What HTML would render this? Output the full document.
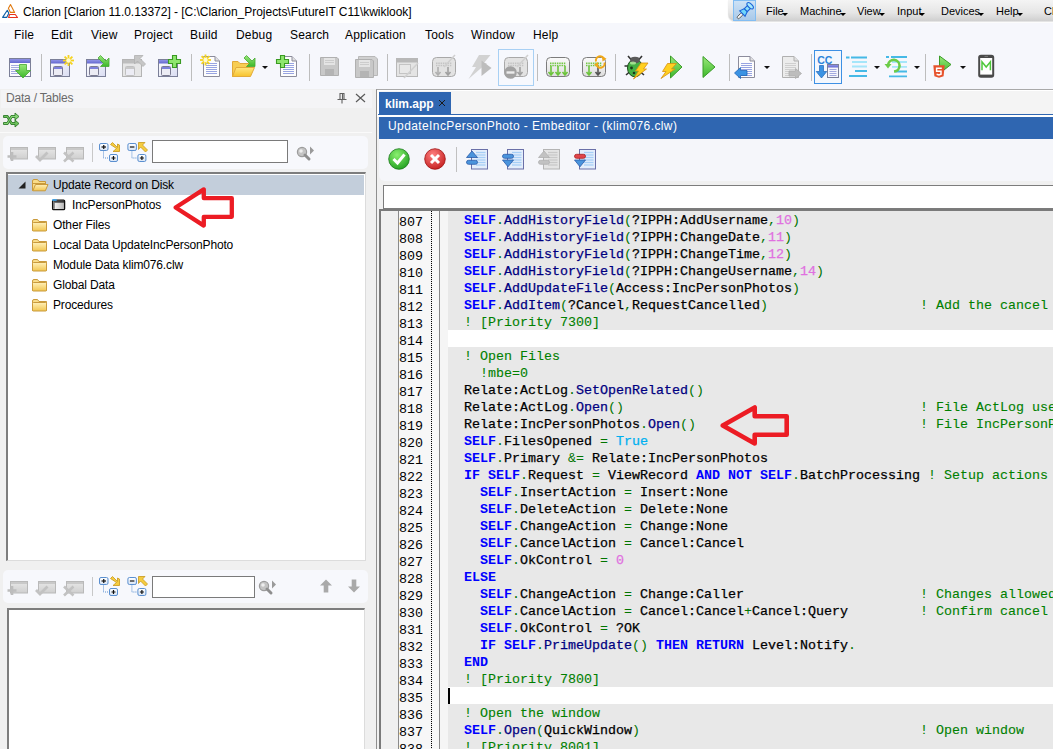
<!DOCTYPE html>
<html><head><meta charset="utf-8">
<style>
*{margin:0;padding:0;box-sizing:border-box}
html,body{width:1053px;height:749px;overflow:hidden}
body{position:relative;background:#f0f0f0;font-family:"Liberation Sans",sans-serif;font-size:12px;color:#000}
.a{position:absolute}
svg{position:absolute;overflow:visible}
#title{left:0;top:0;width:1053px;height:23px;background:#fff}
#title .t{left:23px;top:5px;font-size:12px;white-space:pre;color:#000;letter-spacing:-0.03px}
#vbox{left:728px;top:0;width:330px;height:21px;border-bottom-left-radius:7px;background:linear-gradient(#f4f4f4,#e6e6e6 60%,#cfcfcf);box-shadow:0 1px 1px rgba(0,0,0,.12)}
#vbox span{position:absolute;top:5px;font-family:"Liberation Sans",sans-serif;font-size:11px;color:#000}
#vbox span::after{content:"";position:absolute;right:-4px;bottom:1px;border-left:3px solid transparent;border-right:3px solid transparent;border-top:3px solid #000}
#vbox span.nod::after{display:none}
#pin{left:5px;top:0;width:23px;height:21px;background:linear-gradient(#cde2f6,#a9c9e9);border:1px solid #82bdf2}
#menu{left:0;top:23px;width:1053px;height:66px;background:#f6f7fc}
#menu span{position:absolute;top:5px;font-size:12px;color:#000;letter-spacing:0.2px}
.sep{position:absolute;width:1px;background:#c5c5c5}
/* left panel */
#hdr{left:1px;top:90px;width:371px;height:18px;background:#f4f4f6}
#hdr .t{left:5px;top:1px;color:#6a6a6a;font-size:12px;letter-spacing:-0.2px}
#lrow{left:0;top:108px;width:372px;height:24px;background:#f0f0f0}
#lline{left:0;top:132px;width:372px;height:1px;background:#fafafa}
.tb{position:absolute;background:#f7f8fc;border-radius:5px}
.box{position:absolute;background:#fff;border-top:2px solid #7d7d7d;border-left:2px solid #7d7d7d;border-right:1px solid #dcdcdc;border-bottom:1px solid #dcdcdc}
.srch{position:absolute;background:#fff;border:1px solid #7a7a7a}
.tree div{position:absolute;left:0;height:20px;white-space:pre;font-size:12px}
/* right */
#doc{left:376px;top:89px;width:677px;height:660px;background:#f0f0f0;border-top:1px solid #a9a9a9;border-left:1px solid #8e8e8e}
#tab{left:379px;top:92px;width:72px;height:22px;background:#2f66b1;color:#fff}
#tabline{left:378px;top:114px;width:675px;height:1px;background:#2f66b1}
#whitegap{left:377px;top:90px;width:676px;height:24px;background:#f4f4f4;border-top:1px solid #fff;border-left:2px solid #fff}
#wg2{left:377px;top:114px;width:676px;height:3px;background:#fff}
#wtitle{left:379px;top:117px;width:674px;height:22px;background:#2f66b1;color:#fff}
#wtb{left:379px;top:139px;width:674px;height:42px;background:#f5f6fa;border-radius:0 0 0 6px}
#inp{left:383px;top:185px;width:670px;height:24px;background:#fff;border:1px solid #7c7c7c;border-right:none}
#ed{left:379px;top:209px;width:674px;height:540px;background:#e8e8e8;border-top:2px solid #7a7a7a;border-left:2px solid #7a7a7a}
#g1{left:381px;top:211px;width:17px;height:538px;background:#f0f0f0}
#gl1{left:398px;top:211px;width:1px;height:538px;background:#8a8a8a}
#g2{left:399px;top:211px;width:32px;height:538px;background:#f7f7f7}
#gl2{left:431px;top:211px;width:1px;height:538px;background-image:linear-gradient(#000 50%,transparent 50%);background-size:1px 2px}
#g3{left:432px;top:211px;width:7px;height:538px;background:#f7f7f7}
#gl3{left:439px;top:211px;width:1px;height:538px;background:#8a8a8a}
#g4{left:440px;top:211px;width:8px;height:538px;background:#f5f5f5}
.code{position:absolute;left:448px;top:211px;width:605px;font-family:"Liberation Mono",monospace;font-size:13.333px;line-height:17px;color:#000;white-space:pre;-webkit-text-stroke:0.25px}
.code .r{height:17px;padding-top:3px;line-height:13px}
.code .g{background:#e8e8e8}
.code .w{background:#fff}
.code b{color:#0000ff;font-weight:bold;-webkit-text-stroke:0}
.code i{font-style:normal}
.code .p{color:#007400;-webkit-text-stroke:0}
.code .m{color:#000080}
.code .n{color:#e070e0}
.code .c{color:#008000;-webkit-text-stroke:0.1px}
.code .t{color:#00b0f0}
.nums{position:absolute;left:399px;top:211px;font-family:"Liberation Mono",monospace;font-size:13.333px;color:#000}
.nums div{height:17px;padding-top:5px;line-height:13px}
</style></head><body>
<div id="title" class="a">
<svg style="left:0;top:0" width="20" height="20" viewBox="0 0 20 20"><path d="M10.5 4.6 L8.4 8.2 L10.4 12.4 H14.6 Z" fill="none" stroke="#e07a12" stroke-width="1.1" stroke-linejoin="round"/><path d="M7.3 10.3 L2.6 17.4 H6.7 L8.8 13.2 Z" fill="none" stroke="#0f5fa6" stroke-width="1.1" stroke-linejoin="round"/><path d="M9.6 14.5 H15.3 L17.5 17.5 H8.6 Z" fill="none" stroke="#e8321e" stroke-width="1.1" stroke-linejoin="round"/></svg>
<div class="a t">Clarion [Clarion 11.0.13372] - [C:\Clarion_Projects\FutureIT C11\kwiklook]</div>
</div>
<div id="vbox" class="a">
 <div id="pin" class="a"><svg style="left:-1px;top:-1px" width="24" height="22" viewBox="0 0 24 22"><g transform="rotate(-45 11.5 11.4)"><rect x="1.8" y="10.1" width="7" height="2.6" rx="1.3" fill="#f4f4f4" stroke="#555" stroke-width=".9"/><path d="M8.5 7.6 V15.2 L13.5 13.4 V9.4 Z" fill="#6fd6fa" stroke="#1c64d8" stroke-width="1.1"/><rect x="13.3" y="9.3" width="4.5" height="4.2" fill="#8ee0fa" stroke="#1c64d8" stroke-width="1.1"/><ellipse cx="19.5" cy="11.4" rx="2" ry="4" fill="#a6eafc" stroke="#1c64d8" stroke-width="1.1"/></g></svg></div>
 <span style="left:38px">File</span>
 <span style="left:72px">Machine</span>
 <span style="left:129px">View</span>
 <span style="left:169px">Input</span>
 <span style="left:213px">Devices</span>
 <span style="left:268px">Help</span>
 <span style="left:316px" class="nod">Cl</span>
</div>
<div id="menu" class="a">
 <span style="left:14px">File</span>
 <span style="left:51px">Edit</span>
 <span style="left:91px">View</span>
 <span style="left:134px">Project</span>
 <span style="left:190px">Build</span>
 <span style="left:236px">Debug</span>
 <span style="left:290px">Search</span>
 <span style="left:345px">Application</span>
 <span style="left:425px">Tools</span>
 <span style="left:471px">Window</span>
 <span style="left:533px">Help</span>
</div>
<svg style="left:0;top:0" width="1053" height="89" viewBox="0 0 1053 89"><defs>
<linearGradient id="gA" x1="0" y1="0" x2="0" y2="1"><stop offset="0" stop-color="#9ae87a"/><stop offset="1" stop-color="#3cb82a"/></linearGradient>
<linearGradient id="tb" x1="0" y1="0" x2="0" y2="1"><stop offset="0" stop-color="#8f92e6"/><stop offset="1" stop-color="#6367cf"/></linearGradient>
<linearGradient id="wb" x1="0" y1="0" x2="1" y2="1"><stop offset="0" stop-color="#ffffff"/><stop offset="1" stop-color="#d9dcf2"/></linearGradient>
<linearGradient id="fo" x1="0" y1="0" x2="0" y2="1"><stop offset="0" stop-color="#ffe680"/><stop offset="1" stop-color="#f7c22c"/></linearGradient>
<linearGradient id="cg" x1="0" y1="0" x2="0" y2="1"><stop offset="0" stop-color="#fafafa"/><stop offset="1" stop-color="#dedede"/></linearGradient>
</defs><rect x="9.5" y="58.5" width="21" height="18" fill="#fafafd" stroke="#7b7f98"/><rect x="10" y="59" width="20" height="4" fill="url(#tb)"/><line x1="11" x2="19" y1="65.5" y2="65.5" stroke="#a3aadf"/><line x1="11" x2="19" y1="67.5" y2="67.5" stroke="#a3aadf"/><line x1="11" x2="19" y1="69.5" y2="69.5" stroke="#a3aadf"/><line x1="11" x2="19" y1="71.5" y2="71.5" stroke="#a3aadf"/><line x1="11" x2="19" y1="73.5" y2="73.5" stroke="#a3aadf"/><path d="M19.5 64.5 H26.5 V70.5 H30.5 L23 78 L15.5 70.5 H19.5 Z" fill="url(#gA)" stroke="#45a830" stroke-width=".8"/><rect x="50.5" y="59.5" width="19" height="17" fill="url(#wb)" stroke="#7b7f98"/><rect x="51" y="60" width="18" height="3.5" fill="url(#tb)"/><rect x="53.5" y="66.5" width="9" height="9" rx="1" fill="#ececf4" stroke="#7a7a90"/><rect x="54" y="67" width="8" height="2" fill="#7d80dc"/><line x1="68.5" y1="60.5" x2="74.0" y2="60.5" stroke="#f5d320" stroke-width="1.8"/><line x1="68.5" y1="60.5" x2="72.4" y2="64.4" stroke="#f5d320" stroke-width="1.8"/><line x1="68.5" y1="60.5" x2="68.5" y2="66.0" stroke="#f5d320" stroke-width="1.8"/><line x1="68.5" y1="60.5" x2="64.6" y2="64.4" stroke="#f5d320" stroke-width="1.8"/><line x1="68.5" y1="60.5" x2="63.0" y2="60.5" stroke="#f5d320" stroke-width="1.8"/><line x1="68.5" y1="60.5" x2="64.6" y2="56.6" stroke="#f5d320" stroke-width="1.8"/><line x1="68.5" y1="60.5" x2="68.5" y2="55.0" stroke="#f5d320" stroke-width="1.8"/><line x1="68.5" y1="60.5" x2="72.4" y2="56.6" stroke="#f5d320" stroke-width="1.8"/><circle cx="68.5" cy="60.5" r="2.2" fill="#fffbd0"/><rect x="86.5" y="59.5" width="19" height="17" fill="url(#wb)" stroke="#7b7f98"/><rect x="87" y="60" width="18" height="3.5" fill="url(#tb)"/><rect x="89.5" y="66.5" width="9" height="9" rx="1" fill="#ececf4" stroke="#7a7a90"/><rect x="90" y="67" width="8" height="2" fill="#7d80dc"/><path d="M100.5 55.5 L106.0 61.0 L109.0 58.0 L109.0 66.5 L100.5 66.5 L103.5 63.5 L98.0 58.0 Z" fill="url(#gA)" stroke="#45a830" stroke-width=".8"/><rect x="122.5" y="59.5" width="19" height="17" fill="#e6e6e6" stroke="#b4b4b4"/><rect x="123" y="60" width="18" height="3.5" fill="#bdbdbd"/><rect x="125.5" y="66.5" width="9" height="9" rx="1" fill="#ececf4" stroke="#c0c0c0"/><rect x="126" y="67" width="8" height="2" fill="#c8c8c8"/><path d="M134.5 55.5 L143.0 55.5 L140.0 58.5 L145.5 64.0 L143.0 66.5 L137.5 61.0 L134.5 64.0 Z" fill="#c6c6c6" stroke="#b0b0b0" stroke-width=".8"/><rect x="158.5" y="59.5" width="19" height="17" fill="url(#wb)" stroke="#7b7f98"/><rect x="159" y="60" width="18" height="3.5" fill="url(#tb)"/><rect x="161.5" y="66.5" width="9" height="9" rx="1" fill="#ececf4" stroke="#7a7a90"/><rect x="162" y="67" width="8" height="2" fill="#7d80dc"/><path d="M172.5 55.5 h4 v4 h4 v4 h-4 v4 h-4 v-4 h-4 v-4 h4 Z" fill="#8ee66e" stroke="#3a9a22" stroke-width="1.1"/><path d="M203.5 56.5 H215 L219.5 61 V76.5 H203.5 Z" fill="#fdfdfd" stroke="#8c8c9c"/><path d="M215 56.5 V61 H219.5" fill="#e0e0e0" stroke="#8c8c9c"/><line x1="206" x2="217" y1="63.5" y2="63.5" stroke="#98a4e2"/><line x1="206" x2="217" y1="65.5" y2="65.5" stroke="#98a4e2"/><line x1="206" x2="217" y1="67.5" y2="67.5" stroke="#98a4e2"/><line x1="206" x2="217" y1="69.5" y2="69.5" stroke="#98a4e2"/><line x1="206" x2="217" y1="71.5" y2="71.5" stroke="#98a4e2"/><line x1="206" x2="217" y1="73.5" y2="73.5" stroke="#98a4e2"/><line x1="205.5" y1="60.0" x2="211.0" y2="60.0" stroke="#f5d320" stroke-width="1.8"/><line x1="205.5" y1="60.0" x2="209.4" y2="63.9" stroke="#f5d320" stroke-width="1.8"/><line x1="205.5" y1="60.0" x2="205.5" y2="65.5" stroke="#f5d320" stroke-width="1.8"/><line x1="205.5" y1="60.0" x2="201.6" y2="63.9" stroke="#f5d320" stroke-width="1.8"/><line x1="205.5" y1="60.0" x2="200.0" y2="60.0" stroke="#f5d320" stroke-width="1.8"/><line x1="205.5" y1="60.0" x2="201.6" y2="56.1" stroke="#f5d320" stroke-width="1.8"/><line x1="205.5" y1="60.0" x2="205.5" y2="54.5" stroke="#f5d320" stroke-width="1.8"/><line x1="205.5" y1="60.0" x2="209.4" y2="56.1" stroke="#f5d320" stroke-width="1.8"/><circle cx="205.5" cy="60" r="2.2" fill="#fffbd0"/><path d="M232.5 61.5 H238 L240 63.5 H249.5 V76.5 H232.5 Z" fill="#f7cd52" stroke="#e0a838"/><path d="M232.5 76.5 L236 67.5 H254.5 L250.5 76.5 Z" fill="url(#fo)" stroke="#e3ab3a"/><path d="M246.5 55.5 L252.0 61.0 L255.0 58.0 L255.0 66.5 L246.5 66.5 L249.5 63.5 L244.0 58.0 Z" fill="url(#gA)" stroke="#45a830" stroke-width=".8"/><path d="M280.5 56.5 H292 L296.5 61 V76.5 H280.5 Z" fill="#fdfdfd" stroke="#8c8c9c"/><path d="M292 56.5 V61 H296.5" fill="#e0e0e0" stroke="#8c8c9c"/><line x1="283" x2="294" y1="63.5" y2="63.5" stroke="#98a4e2"/><line x1="283" x2="294" y1="65.5" y2="65.5" stroke="#98a4e2"/><line x1="283" x2="294" y1="67.5" y2="67.5" stroke="#98a4e2"/><line x1="283" x2="294" y1="69.5" y2="69.5" stroke="#98a4e2"/><line x1="283" x2="294" y1="71.5" y2="71.5" stroke="#98a4e2"/><line x1="283" x2="294" y1="73.5" y2="73.5" stroke="#98a4e2"/><path d="M280.5 55.5 h4 v4 h4 v4 h-4 v4 h-4 v-4 h-4 v-4 h4 Z" fill="#8ee66e" stroke="#3a9a22" stroke-width="1.1"/><path d="M320.5 57.5 H337 L338.5 59 V75.5 H320.5 Z" fill="#c8c8c8" stroke="#b0b0b0"/><rect x="324" y="58" width="11" height="7" fill="#e4e4e4"/><path d="M325 60.5 H334 M325 62.5 H334" stroke="#cccccc"/><rect x="325" y="69" width="9" height="6" fill="#b4b4b4"/><path d="M358.5 56.5 H375 L377.5 59 V75.5 H358.5 Z" fill="#d0d0d0" stroke="#b8b8b8"/><path d="M355.5 59.5 H372 L373.5 61 V77.5 H355.5 Z" fill="#c8c8c8" stroke="#b0b0b0"/><rect x="359" y="60" width="11" height="7" fill="#e4e4e4"/><path d="M360 62.5 H369 M360 64.5 H369" stroke="#cccccc"/><rect x="360" y="71" width="9" height="6" fill="#b4b4b4"/><rect x="396.5" y="58.5" width="21" height="18" fill="#e4e4e4" stroke="#b8b8b8"/><rect x="397" y="59" width="20" height="3.5" fill="#b8b8b8"/><rect x="399.5" y="64.5" width="11" height="9" fill="#e8e8e8" stroke="#c4c4c4"/><path d="M418 63 L404 78" stroke="#d0d0d0" stroke-width="1.6"/><rect x="432.5" y="57.5" width="23" height="19" rx="4" fill="#e2e2e2" stroke="#a8a8a8"/><line x1="436" x2="452" y1="63.3" y2="63.3" stroke="#c4c4c4" stroke-width="1.5" stroke-dasharray="1.5 .8"/><line x1="436" x2="452" y1="65.4" y2="65.4" stroke="#c4c4c4" stroke-width="1.5" stroke-dasharray="1.5 .8"/><path d="M438 67 V75 M435.5 72 L438 75 L440.5 72" stroke="#b0b0b0" stroke-width="1.6" fill="none"/><path d="M448 67 V75 M445.5 72 L448 75 L450.5 72" stroke="#a0a0a0" stroke-width="1.6" fill="none"/><path d="M455 55 L444 67" stroke="#cfcfcf" stroke-width="1.6"/><path d="M479 55 H490.5 L484 63 H487 L468.5 79 L476 67 H472 Z" fill="#d2d2d2"/><path d="M481.5 60.5 L491.5 68 L481.5 76 Z" fill="#bdbdbd"/><rect x="498.5" y="49.5" width="35" height="36" fill="#f6f8fd" stroke="#a8d0f4"/><rect x="504.5" y="57.5" width="23" height="19" rx="4" fill="#e2e2e2" stroke="#a8a8a8"/><line x1="508" x2="524" y1="63.3" y2="63.3" stroke="#c4c4c4" stroke-width="1.5" stroke-dasharray="1.5 .8"/><line x1="508" x2="524" y1="65.4" y2="65.4" stroke="#c4c4c4" stroke-width="1.5" stroke-dasharray="1.5 .8"/><path d="M520 67 V75 M517.5 72 L520 75 L522.5 72" stroke="#a0a0a0" stroke-width="1.6" fill="none"/><path d="M528 55 L517 67" stroke="#cfcfcf" stroke-width="1.6"/><circle cx="510.5" cy="72.5" r="6.3" fill="#a2a2a2"/><rect x="506.5" y="71.3" width="8" height="2.4" fill="#ececec"/><rect x="546.5" y="57.5" width="23" height="19" rx="4" fill="url(#cg)" stroke="#7c7c7c"/><line x1="550" x2="566" y1="63.3" y2="63.3" stroke="#74c846" stroke-width="1.5" stroke-dasharray="1.5 .8"/><line x1="550" x2="566" y1="65.4" y2="65.4" stroke="#74c846" stroke-width="1.5" stroke-dasharray="1.5 .8"/><path d="M551 66 V75 M548.5 72 L551 75 L553.5 72" stroke="#6cc43c" stroke-width="1.6" fill="none"/><path d="M558 66 V75 M555.5 72 L558 75 L560.5 72" stroke="#6cc43c" stroke-width="1.6" fill="none"/><path d="M565 66 V75 M562.5 72 L565 75 L567.5 72" stroke="#6cc43c" stroke-width="1.6" fill="none"/><rect x="582.5" y="57.5" width="23" height="19" rx="4" fill="url(#cg)" stroke="#7c7c7c"/><line x1="586" x2="602" y1="63.3" y2="63.3" stroke="#74c846" stroke-width="1.5" stroke-dasharray="1.5 .8"/><line x1="586" x2="602" y1="65.4" y2="65.4" stroke="#74c846" stroke-width="1.5" stroke-dasharray="1.5 .8"/><path d="M589 66 V75 M586.5 72 L589 75 L591.5 72" stroke="#6cc43c" stroke-width="1.6" fill="none"/><path d="M598 66 V75 M595.5 72 L598 75 L600.5 72" stroke="#555555" stroke-width="1.6" fill="none"/><path d="M596 61.5 A4.2 4.2 0 0 1 604 59" fill="none" stroke="#f0a818" stroke-width="2"/><path d="M604.5 62.5 A4.2 4.2 0 0 1 596.5 65" fill="none" stroke="#f0a818" stroke-width="2"/><path d="M602 56 L606.5 58.8 L602.5 61.5 Z M598.5 67.5 L594 64.7 L598 62 Z" fill="#f0a818"/><path d="M628 56 L631.5 60 M642 56 L638.5 60 M624.5 66 H629 M645 66 H641 M626 75 L630 71.5 M644 75 L640 71.5" stroke="#333" stroke-width="1.6"/><ellipse cx="635" cy="68" rx="7.5" ry="8.8" fill="#44b044" stroke="#1d4d1d" stroke-width="1"/><ellipse cx="635" cy="60" rx="4.8" ry="3.2" fill="#5a5a5a"/><ellipse cx="633" cy="63" rx="3" ry="1.5" fill="#b8f0a0" opacity=".8"/><circle cx="631.5" cy="68" r="1.4" fill="#1a3a1a"/><circle cx="634" cy="73" r="1.3" fill="#1a3a1a"/><path d="M641 63 H648 L643.5 69 H646.5 L633.5 79 L638.5 71 H635.5 Z" fill="#ffd020" stroke="#d89010" stroke-width=".8"/><path d="M670.5 56 L682 67 L670.5 78 Z" fill="url(#gA)" stroke="#3a9c28"/><path d="M667.5 63.5 H676.5 L671.5 69 H675 L661 78.5 L666 71.5 H662.5 Z" fill="#ffd020" stroke="#d89010" stroke-width=".8"/><path d="M703 56.5 L715 67 L703 77.5 Z" fill="url(#gA)" stroke="#3a9c28"/><path d="M738.5 56.5 H750 L754.5 61 V77.5 H738.5 Z" fill="#fdfdfd" stroke="#8c8c9c"/><path d="M750 56.5 V61 H754.5" fill="#e0e0e0" stroke="#8c8c9c"/><line x1="741" x2="752" y1="63.5" y2="63.5" stroke="#98a4e2"/><line x1="741" x2="752" y1="65.5" y2="65.5" stroke="#98a4e2"/><line x1="741" x2="752" y1="67.5" y2="67.5" stroke="#98a4e2"/><line x1="741" x2="752" y1="69.5" y2="69.5" stroke="#98a4e2"/><line x1="741" x2="752" y1="71.5" y2="71.5" stroke="#98a4e2"/><line x1="741" x2="752" y1="73.5" y2="73.5" stroke="#98a4e2"/><line x1="741" x2="752" y1="75.5" y2="75.5" stroke="#98a4e2"/><path d="M734.5 73 L740.5 67.5 V70.5 H747 V75.5 H740.5 V78.5 Z" fill="#3b93e3" stroke="#1f65b8" stroke-width=".8"/><path d="M782.5 56.5 H794 L798.5 61 V77.5 H782.5 Z" fill="#ececec" stroke="#b0b0b0"/><path d="M794 56.5 V61 H798.5" fill="#e0e0e0" stroke="#b0b0b0"/><line x1="785" x2="796" y1="63.5" y2="63.5" stroke="#cfcfcf"/><line x1="785" x2="796" y1="65.5" y2="65.5" stroke="#cfcfcf"/><line x1="785" x2="796" y1="67.5" y2="67.5" stroke="#cfcfcf"/><line x1="785" x2="796" y1="69.5" y2="69.5" stroke="#cfcfcf"/><line x1="785" x2="796" y1="71.5" y2="71.5" stroke="#cfcfcf"/><line x1="785" x2="796" y1="73.5" y2="73.5" stroke="#cfcfcf"/><line x1="785" x2="796" y1="75.5" y2="75.5" stroke="#cfcfcf"/><path d="M801.5 73.5 L795.5 68.5 V71 H789 V76 H795.5 V78.5 Z" fill="#bdbdbd" stroke="#adadad" stroke-width=".8"/><rect x="814.5" y="50.5" width="27" height="33" fill="#f3f7fd" stroke="#3d90e4"/><text x="817.3" y="63.5" font-family="Liberation Sans" font-weight="bold" font-size="10.5" fill="#2a84da" letter-spacing="-.2">CC</text><path d="M819.5 65.5 H823.5 V71.5 H826.8 L821.5 78 L816.2 71.5 H819.5 Z" fill="#3b93e3" stroke="#1f65b8" stroke-width=".7"/><rect x="827.5" y="64.5" width="11" height="13" fill="#f6f6fb" stroke="#7b7f98"/><rect x="828" y="65" width="10" height="2.5" fill="url(#tb)"/><path d="M829.5 69.5 H836.5 M829.5 71.5 H836.5 M829.5 73.5 H836.5 M829.5 75.5 H836.5" stroke="#a3aadf"/><path d="M846 57.5 H849.5 M851 57.5 H867" stroke="#45b9e6" stroke-width="1.8"/><path d="M852 62 H867 M852 66.5 H867" stroke="#a6e6fa" stroke-width="1.8"/><path d="M855 71 H867 M849 76 H867" stroke="#45b9e6" stroke-width="1.8"/><path d="M886 57 H889 M891 57 H907" stroke="#45b9e6" stroke-width="1.8"/><path d="M892 62 H907 M892 66.8 H907" stroke="#a6e6fa" stroke-width="1.8"/><path d="M895 71.5 H907 M889 76.4 H907" stroke="#45b9e6" stroke-width="1.8"/><path d="M888 65 A5.8 5.8 0 1 1 894 71.5" fill="none" stroke="#6ccc48" stroke-width="2.6"/><path d="M884.5 64 H891.5 L888 68.5 Z" fill="#6ccc48"/><path d="M939.5 56 L951 64.5 L939.5 73.5 Z" fill="url(#gA)" stroke="#3a9c28"/><path d="M933.3 65.2 H944.7 L943.6 76.3 L939 77.7 L934.4 76.3 Z" fill="#e6522c"/><path d="M941.8 68.3 H936.6 V71.2 H941 V74.2 L938.9 74.9 L936.6 74.2" fill="none" stroke="#fff" stroke-width="1.5"/><rect x="978.2" y="54.8" width="16" height="23" rx="2.8" fill="#4a4a4a"/><rect x="980.2" y="58" width="12" height="16.6" fill="#fff"/><path d="M982 70.2 V61.8 L986.2 67 L990.4 61.8 V70.2" fill="none" stroke="#4ec83a" stroke-width="1.5"/><path d="M984.5 56.4 H988" stroke="#888" stroke-width=".8"/></svg>
<div class="sep" style="left:41px;top:54px;height:27px;background:#bdbdbd"></div>
<div class="sep" style="left:191px;top:54px;height:27px;background:#bdbdbd"></div>
<div class="sep" style="left:309px;top:54px;height:27px;background:#bdbdbd"></div>
<div class="sep" style="left:387px;top:54px;height:27px;background:#bdbdbd"></div>
<div class="sep" style="left:537px;top:54px;height:27px;background:#bdbdbd"></div>
<div class="sep" style="left:615px;top:54px;height:27px;background:#bdbdbd"></div>
<div class="sep" style="left:729px;top:54px;height:27px;background:#bdbdbd"></div>
<div class="sep" style="left:811px;top:54px;height:27px;background:#bdbdbd"></div>
<div class="sep" style="left:925px;top:54px;height:27px;background:#bdbdbd"></div>
<svg style="left:262px;top:66px" width="6" height="3" viewBox="0 0 6 3"><path d="M0 0 H6 L3 3 Z" fill="#111"/></svg>
<svg style="left:764px;top:66px" width="6" height="3" viewBox="0 0 6 3"><path d="M0 0 H6 L3 3 Z" fill="#111"/></svg>
<svg style="left:874px;top:66px" width="6" height="3" viewBox="0 0 6 3"><path d="M0 0 H6 L3 3 Z" fill="#111"/></svg>
<svg style="left:914px;top:66px" width="6" height="3" viewBox="0 0 6 3"><path d="M0 0 H6 L3 3 Z" fill="#111"/></svg>
<svg style="left:960px;top:66px" width="6" height="3" viewBox="0 0 6 3"><path d="M0 0 H6 L3 3 Z" fill="#111"/></svg>
<div id="hdr" class="a"><div class="a t">Data / Tables</div></div>
<svg style="left:337px;top:92px" width="10" height="12" viewBox="0 0 10 12"><path d="M2.5 1.5 H7.5 M3 1.5 V7.5 M7 1.5 V7.5 M5.5 1.5 V7.5 M0.5 7.5 H9.5 M5 7.5 V11.5" stroke="#606060" stroke-width="1.1" fill="none"/></svg>
<svg style="left:355px;top:93px" width="11" height="10" viewBox="0 0 11 10"><path d="M1 1 L10 9 M10 1 L1 9" stroke="#5a5a5a" stroke-width="1.2"/></svg>
<div id="lrow" class="a"></div><div id="lline" class="a"></div>
<svg style="left:3px;top:112px" width="17" height="16" viewBox="0 0 17 16"><path d="M0.5 3.5 H5 L9 10.5 H12 V8 L16 11.5 L12 15 V12.5 H8 L4 5.5 H0.5 Z" fill="#6cc05a" stroke="#2f7a2a" stroke-width=".9"/><path d="M0.5 10.5 H4 L8 3.5 H12 V1 L16 4.5 L12 8 V5.5 H9 L5 12.5 H0.5 Z" fill="#86d474" stroke="#2f7a2a" stroke-width=".9"/></svg>
<div class="tb" style="left:3px;top:136px;width:365px;height:33px"></div>
<svg style="left:0;top:0" width="380" height="749" viewBox="0 0 380 749"><defs><linearGradient id="gbx" x1="0" y1="0" x2="0" y2="1"><stop offset="0" stop-color="#e8e8e8"/><stop offset="1" stop-color="#cfcfcf"/></linearGradient><linearGradient id="gsq" x1="0" y1="0" x2="0" y2="1"><stop offset="0" stop-color="#ffffff"/><stop offset="1" stop-color="#d8e4f4"/></linearGradient></defs><rect x="10.5" y="147.5" width="17" height="11.5" fill="url(#gbx)" stroke="#b9b9b9"/><rect x="11" y="148" width="16" height="2" fill="#c9c9c9"/><rect x="38.5" y="147.5" width="17" height="11.5" fill="url(#gbx)" stroke="#b9b9b9"/><rect x="39" y="148" width="16" height="2" fill="#c9c9c9"/><rect x="66.5" y="147.5" width="17" height="11.5" fill="url(#gbx)" stroke="#b9b9b9"/><rect x="67" y="148" width="16" height="2" fill="#c9c9c9"/><path d="M7.5 156.5 H16.5 M12 152 V161" stroke="#bdbdbd" stroke-width="2.6"/><path d="M36 156 L40 160 L47.5 152.5" stroke="#c2c2c2" stroke-width="2.8" fill="none"/><path d="M64 152.5 L73.5 161.5 M73.5 152.5 L64 161.5" stroke="#c2c2c2" stroke-width="2.6"/><rect x="99.5" y="143.5" width="8.5" height="7" rx="1.5" fill="url(#gsq)" stroke="#5a8fd0"/><path d="M101.5 147 H106" stroke="#111" stroke-width="1.2"/><path d="M103.75 145 V149" stroke="#111" stroke-width="1.2"/><path d="M103.5 151.5 V158 H109" stroke="#5a8fd0" stroke-dasharray="1 1" fill="none"/><rect x="109.5" y="154.5" width="8" height="7" rx="1.5" fill="url(#gsq)" stroke="#5a8fd0"/><path d="M111.5 158 H115.5 M113.5 156 V160" stroke="#111" stroke-width="1.2"/><path d="M110.5 144.5 L112.5 142.5 L117.5 147.5 L117.5 144 L119.5 145 L119.5 151.5 L113 151.5 L116.5 148.5 Z" fill="#f5cc40" stroke="#c8981a" stroke-width=".8"/><rect x="127.9" y="143.5" width="8.5" height="7" rx="1.5" fill="url(#gsq)" stroke="#5a8fd0"/><path d="M129.9 147 H134.4" stroke="#111" stroke-width="1.2"/><path d="M131.9 151.5 V158 H137.4" stroke="#5a8fd0" stroke-dasharray="1 1" fill="none"/><rect x="137.9" y="154.5" width="8" height="7" rx="1.5" fill="url(#gsq)" stroke="#5a8fd0"/><path d="M139.9 158 H143.9 M141.9 156 V160" stroke="#111" stroke-width="1.2"/><path d="M138.5 142.5 H145 L142.5 145 L147.5 150 L145.5 152 L140.5 147 L138.5 149.5 Z" fill="#f5cc40" stroke="#c8981a" stroke-width=".8"/><circle cx="302" cy="152" r="4.6" fill="#c4c4c4" stroke="#9c9c9c" stroke-width="1.2"/><circle cx="301" cy="151" r="1.8" fill="#eeeeee"/><path d="M305 155 L309 159" stroke="#8e8e8e" stroke-width="3" stroke-linecap="round"/><path d="M310 146.5 L314 150.5 L310 154.5 Z" fill="#9a9a9a"/></svg>
<div class="sep" style="left:92px;top:143px;height:19px;background:#c8c8c8"></div>
<div class="srch" style="left:152px;top:140px;width:136px;height:23px"></div>
<div class="box" style="left:6px;top:172px;width:360px;height:389px"></div>
<div class="a" style="left:8px;top:175px;width:356px;height:20px;background:#c3cedb"></div>
<svg style="left:18px;top:181px" width="8" height="8" viewBox="0 0 8 8"><path d="M7.5 0.5 V7.5 H0.5 Z" fill="#222"/></svg>
<svg style="left:32px;top:179px" width="17" height="13" viewBox="0 0 17 13"><defs><linearGradient id="fd1" x1="0" y1="0" x2="0" y2="1"><stop offset="0" stop-color="#fff0b8"/><stop offset="1" stop-color="#f2c650"/></linearGradient><linearGradient id="ic1" x1="0" y1="0" x2="1" y2="0"><stop offset="0" stop-color="#ffffff"/><stop offset="1" stop-color="#b4b4b4"/></linearGradient></defs><path d="M0.5 11.5 V2 Q0.5 .5 2 .5 H5.5 L7 2.5 H13.5 V5" fill="#f8dc88" stroke="#c99a3c"/><path d="M0.5 11.5 V4.5 H13.5 V5.5" fill="none" stroke="#c99a3c"/><path d="M0.8 11.8 L3.5 5.5 H16 L13.3 11.8 Z" fill="url(#fd1)" stroke="#c99a3c" stroke-linejoin="round"/></svg>
<div class="a" style="left:53px;top:178px;white-space:pre;font-size:12px;letter-spacing:-0.15px">Update Record on Disk</div>
<div class="a" style="left:72px;top:198px;white-space:pre;font-size:12px;letter-spacing:-0.15px">IncPersonPhotos</div>
<div class="a" style="left:53px;top:218px;white-space:pre;font-size:12px;letter-spacing:-0.15px">Other Files</div>
<div class="a" style="left:53px;top:238px;white-space:pre;font-size:12px;letter-spacing:-0.15px">Local Data UpdateIncPersonPhoto</div>
<div class="a" style="left:53px;top:258px;white-space:pre;font-size:12px;letter-spacing:-0.15px">Module Data klim076.clw</div>
<div class="a" style="left:53px;top:278px;white-space:pre;font-size:12px;letter-spacing:-0.15px">Global Data</div>
<div class="a" style="left:53px;top:298px;white-space:pre;font-size:12px;letter-spacing:-0.15px">Procedures</div>
<svg style="left:32px;top:219px" width="16" height="13" viewBox="0 0 16 13"><defs><linearGradient id="fd1" x1="0" y1="0" x2="0" y2="1"><stop offset="0" stop-color="#fff0b8"/><stop offset="1" stop-color="#f2c650"/></linearGradient><linearGradient id="ic1" x1="0" y1="0" x2="1" y2="0"><stop offset="0" stop-color="#ffffff"/><stop offset="1" stop-color="#b4b4b4"/></linearGradient></defs><path d="M0.5 11.5 V2 Q0.5 .5 2 .5 H5.5 L7 2.5 H14.5 V11.5 Z" fill="#f8dc88" stroke="#c99a3c"/><rect x="0.5" y="3.5" width="14" height="8.5" rx=".8" fill="url(#fd1)" stroke="#c99a3c"/></svg>
<svg style="left:32px;top:239px" width="16" height="13" viewBox="0 0 16 13"><defs><linearGradient id="fd1" x1="0" y1="0" x2="0" y2="1"><stop offset="0" stop-color="#fff0b8"/><stop offset="1" stop-color="#f2c650"/></linearGradient><linearGradient id="ic1" x1="0" y1="0" x2="1" y2="0"><stop offset="0" stop-color="#ffffff"/><stop offset="1" stop-color="#b4b4b4"/></linearGradient></defs><path d="M0.5 11.5 V2 Q0.5 .5 2 .5 H5.5 L7 2.5 H14.5 V11.5 Z" fill="#f8dc88" stroke="#c99a3c"/><rect x="0.5" y="3.5" width="14" height="8.5" rx=".8" fill="url(#fd1)" stroke="#c99a3c"/></svg>
<svg style="left:32px;top:259px" width="16" height="13" viewBox="0 0 16 13"><defs><linearGradient id="fd1" x1="0" y1="0" x2="0" y2="1"><stop offset="0" stop-color="#fff0b8"/><stop offset="1" stop-color="#f2c650"/></linearGradient><linearGradient id="ic1" x1="0" y1="0" x2="1" y2="0"><stop offset="0" stop-color="#ffffff"/><stop offset="1" stop-color="#b4b4b4"/></linearGradient></defs><path d="M0.5 11.5 V2 Q0.5 .5 2 .5 H5.5 L7 2.5 H14.5 V11.5 Z" fill="#f8dc88" stroke="#c99a3c"/><rect x="0.5" y="3.5" width="14" height="8.5" rx=".8" fill="url(#fd1)" stroke="#c99a3c"/></svg>
<svg style="left:32px;top:279px" width="16" height="13" viewBox="0 0 16 13"><defs><linearGradient id="fd1" x1="0" y1="0" x2="0" y2="1"><stop offset="0" stop-color="#fff0b8"/><stop offset="1" stop-color="#f2c650"/></linearGradient><linearGradient id="ic1" x1="0" y1="0" x2="1" y2="0"><stop offset="0" stop-color="#ffffff"/><stop offset="1" stop-color="#b4b4b4"/></linearGradient></defs><path d="M0.5 11.5 V2 Q0.5 .5 2 .5 H5.5 L7 2.5 H14.5 V11.5 Z" fill="#f8dc88" stroke="#c99a3c"/><rect x="0.5" y="3.5" width="14" height="8.5" rx=".8" fill="url(#fd1)" stroke="#c99a3c"/></svg>
<svg style="left:32px;top:299px" width="16" height="13" viewBox="0 0 16 13"><defs><linearGradient id="fd1" x1="0" y1="0" x2="0" y2="1"><stop offset="0" stop-color="#fff0b8"/><stop offset="1" stop-color="#f2c650"/></linearGradient><linearGradient id="ic1" x1="0" y1="0" x2="1" y2="0"><stop offset="0" stop-color="#ffffff"/><stop offset="1" stop-color="#b4b4b4"/></linearGradient></defs><path d="M0.5 11.5 V2 Q0.5 .5 2 .5 H5.5 L7 2.5 H14.5 V11.5 Z" fill="#f8dc88" stroke="#c99a3c"/><rect x="0.5" y="3.5" width="14" height="8.5" rx=".8" fill="url(#fd1)" stroke="#c99a3c"/></svg>
<svg style="left:51px;top:198px" width="16" height="14" viewBox="0 0 16 14"><rect x="1.6" y="2.1" width="12" height="9.6" rx="1" fill="url(#ic1)" stroke="#111" stroke-width="1.3"/><path d="M2.4 3.9 H13" stroke="#111" stroke-width="1.3"/><path d="M3 4.8 V10.8" stroke="#333" stroke-width="1"/><rect x="1.2" y="1.2" width="4.5" height="1.6" fill="#3aa6f2"/></svg>
<div class="tb" style="left:3px;top:570px;width:365px;height:33px"></div>
<svg style="left:0;top:0" width="380" height="749" viewBox="0 0 380 749"><defs><linearGradient id="gbx" x1="0" y1="0" x2="0" y2="1"><stop offset="0" stop-color="#e8e8e8"/><stop offset="1" stop-color="#cfcfcf"/></linearGradient><linearGradient id="gsq" x1="0" y1="0" x2="0" y2="1"><stop offset="0" stop-color="#ffffff"/><stop offset="1" stop-color="#d8e4f4"/></linearGradient></defs><rect x="10.5" y="581.5" width="17" height="11.5" fill="url(#gbx)" stroke="#b9b9b9"/><rect x="11" y="582" width="16" height="2" fill="#c9c9c9"/><rect x="38.5" y="581.5" width="17" height="11.5" fill="url(#gbx)" stroke="#b9b9b9"/><rect x="39" y="582" width="16" height="2" fill="#c9c9c9"/><rect x="66.5" y="581.5" width="17" height="11.5" fill="url(#gbx)" stroke="#b9b9b9"/><rect x="67" y="582" width="16" height="2" fill="#c9c9c9"/><path d="M7.5 590.5 H16.5 M12 586 V595" stroke="#bdbdbd" stroke-width="2.6"/><path d="M36 590 L40 594 L47.5 586.5" stroke="#c2c2c2" stroke-width="2.8" fill="none"/><path d="M64 586.5 L73.5 595.5 M73.5 586.5 L64 595.5" stroke="#c2c2c2" stroke-width="2.6"/><rect x="99.5" y="577.5" width="8.5" height="7" rx="1.5" fill="url(#gsq)" stroke="#5a8fd0"/><path d="M101.5 581 H106" stroke="#111" stroke-width="1.2"/><path d="M103.75 579 V583" stroke="#111" stroke-width="1.2"/><path d="M103.5 585.5 V592 H109" stroke="#5a8fd0" stroke-dasharray="1 1" fill="none"/><rect x="109.5" y="588.5" width="8" height="7" rx="1.5" fill="url(#gsq)" stroke="#5a8fd0"/><path d="M111.5 592 H115.5 M113.5 590 V594" stroke="#111" stroke-width="1.2"/><path d="M110.5 578.5 L112.5 576.5 L117.5 581.5 L117.5 578 L119.5 579 L119.5 585.5 L113 585.5 L116.5 582.5 Z" fill="#f5cc40" stroke="#c8981a" stroke-width=".8"/><rect x="127.9" y="577.5" width="8.5" height="7" rx="1.5" fill="url(#gsq)" stroke="#5a8fd0"/><path d="M129.9 581 H134.4" stroke="#111" stroke-width="1.2"/><path d="M131.9 585.5 V592 H137.4" stroke="#5a8fd0" stroke-dasharray="1 1" fill="none"/><rect x="137.9" y="588.5" width="8" height="7" rx="1.5" fill="url(#gsq)" stroke="#5a8fd0"/><path d="M139.9 592 H143.9 M141.9 590 V594" stroke="#111" stroke-width="1.2"/><path d="M138.5 576.5 H145 L142.5 579 L147.5 584 L145.5 586 L140.5 581 L138.5 583.5 Z" fill="#f5cc40" stroke="#c8981a" stroke-width=".8"/><circle cx="264" cy="586" r="4.6" fill="#c4c4c4" stroke="#9c9c9c" stroke-width="1.2"/><circle cx="263" cy="585" r="1.8" fill="#eeeeee"/><path d="M267 589 L271 593" stroke="#8e8e8e" stroke-width="3" stroke-linecap="round"/><path d="M272 580.5 L276 584.5 L272 588.5 Z" fill="#9a9a9a"/><path d="M326 579.5 L332 585.5 H328.3 V592.5 H323.7 V585.5 H320 Z" fill="#a9a9a9"/><path d="M354 592.5 L360 586.5 H356.3 V579.5 H351.7 V586.5 H348 Z" fill="#a9a9a9"/></svg>
<div class="sep" style="left:92px;top:577px;height:19px;background:#c8c8c8"></div>
<div class="srch" style="left:152px;top:576px;width:103px;height:22px"></div>
<div class="box" style="left:7px;top:608px;width:358px;height:145px"></div>
<div class="a" style="left:372px;top:89px;width:4px;height:660px;background:#f0f0f0"></div>
<div id="doc" class="a"></div>
<div id="whitegap" class="a"></div><div id="wg2" class="a"></div>
<div id="tab" class="a"><div class="a" style="left:6px;top:5px;font-weight:bold;font-size:12px">klim.app</div><svg style="left:59px;top:7px" width="8" height="8" viewBox="0 0 8 8"><path d="M1 1 L7 7 M7 1 L1 7" stroke="#1a1a1a" stroke-width="1"/></svg></div>
<div id="tabline" class="a"></div>
<div id="wtitle" class="a"><div class="a" style="left:9px;top:2px;font-size:12px;white-space:pre;letter-spacing:0.4px">UpdateIncPersonPhoto - Embeditor - (klim076.clw)</div></div>
<div id="wtb" class="a"></div>
<svg style="left:388px;top:148px" width="22" height="22" viewBox="0 0 22 22"><defs><radialGradient id="gg" cx=".4" cy=".3" r=".8"><stop offset="0" stop-color="#8af070"/><stop offset="1" stop-color="#1a9a1a"/></radialGradient><radialGradient id="rg" cx=".4" cy=".3" r=".8"><stop offset="0" stop-color="#ff8080"/><stop offset="1" stop-color="#c01818"/></radialGradient></defs><circle cx="11" cy="11" r="10.3" fill="url(#gg)" stroke="#1a7a1a" stroke-width=".8"/><path d="M5.5 11 L9.5 15 L16.5 6.5" stroke="#fff" stroke-width="3" fill="none"/></svg>
<svg style="left:424px;top:148px" width="22" height="22" viewBox="0 0 22 22"><circle cx="11" cy="11" r="10.3" fill="url(#rg)" stroke="#a01010" stroke-width=".8"/><path d="M7 7 L15 15 M15 7 L7 15" stroke="#fff" stroke-width="3"/></svg>
<div class="sep" style="left:456px;top:147px;height:25px;background:#c0c0c0"></div>
<svg style="left:0;top:0" width="700" height="200" viewBox="0 0 700 200"><rect x="471.5" y="149.5" width="16" height="19.5" fill="#e4eefb" stroke="#6a70a8"/><line x1="476" x2="485.5" y1="152.5" y2="152.5" stroke="#a6cff6" stroke-width="1.3"/><line x1="476" x2="485.5" y1="155" y2="155" stroke="#a6cff6" stroke-width="1.3"/><line x1="476" x2="485.5" y1="157.5" y2="157.5" stroke="#a6cff6" stroke-width="1.3"/><line x1="476" x2="485.5" y1="160" y2="160" stroke="#a6cff6" stroke-width="1.3"/><line x1="476" x2="485.5" y1="162.5" y2="162.5" stroke="#a6cff6" stroke-width="1.3"/><line x1="476" x2="485.5" y1="165" y2="165" stroke="#a6cff6" stroke-width="1.3"/><path d="M466.5 157.5 L472 151 L477.5 157.5 Z" fill="#4a94dc" stroke="#2a5aa8" stroke-width=".8"/><rect x="466.5" y="160.3" width="11" height="4" rx="2" fill="#4a94dc" stroke="#2a5aa8" stroke-width=".8"/><rect x="507.5" y="149.5" width="16" height="19.5" fill="#e4eefb" stroke="#6a70a8"/><line x1="512" x2="521.5" y1="152.5" y2="152.5" stroke="#a6cff6" stroke-width="1.3"/><line x1="512" x2="521.5" y1="155" y2="155" stroke="#a6cff6" stroke-width="1.3"/><line x1="512" x2="521.5" y1="157.5" y2="157.5" stroke="#a6cff6" stroke-width="1.3"/><line x1="512" x2="521.5" y1="160" y2="160" stroke="#a6cff6" stroke-width="1.3"/><line x1="512" x2="521.5" y1="162.5" y2="162.5" stroke="#a6cff6" stroke-width="1.3"/><line x1="512" x2="521.5" y1="165" y2="165" stroke="#a6cff6" stroke-width="1.3"/><rect x="502.5" y="154.3" width="11" height="4" rx="2" fill="#4a94dc" stroke="#2a5aa8" stroke-width=".8"/><path d="M502.5 160 L508 166.8 L513.5 160 Z" fill="#4a94dc" stroke="#2a5aa8" stroke-width=".8"/><rect x="543.5" y="149.5" width="16" height="19.5" fill="#e4e4e4" stroke="#b4b4b4"/><line x1="548" x2="557.5" y1="152.5" y2="152.5" stroke="#c8c8c8" stroke-width="1.3"/><line x1="548" x2="557.5" y1="155" y2="155" stroke="#c8c8c8" stroke-width="1.3"/><line x1="548" x2="557.5" y1="157.5" y2="157.5" stroke="#c8c8c8" stroke-width="1.3"/><line x1="548" x2="557.5" y1="160" y2="160" stroke="#c8c8c8" stroke-width="1.3"/><line x1="548" x2="557.5" y1="162.5" y2="162.5" stroke="#c8c8c8" stroke-width="1.3"/><line x1="548" x2="557.5" y1="165" y2="165" stroke="#c8c8c8" stroke-width="1.3"/><path d="M538.5 157.5 L544 151 L549.5 157.5 Z" fill="#c2c2c2" stroke="#b0b0b0" stroke-width=".8"/><rect x="538.5" y="160.3" width="11" height="4" rx="2" fill="#c2c2c2" stroke="#b0b0b0" stroke-width=".8"/><rect x="579.5" y="149.5" width="16" height="19.5" fill="#e4eefb" stroke="#6a70a8"/><line x1="584" x2="593.5" y1="152.5" y2="152.5" stroke="#a6cff6" stroke-width="1.3"/><line x1="584" x2="593.5" y1="155" y2="155" stroke="#a6cff6" stroke-width="1.3"/><line x1="584" x2="593.5" y1="157.5" y2="157.5" stroke="#a6cff6" stroke-width="1.3"/><line x1="584" x2="593.5" y1="160" y2="160" stroke="#a6cff6" stroke-width="1.3"/><line x1="584" x2="593.5" y1="162.5" y2="162.5" stroke="#a6cff6" stroke-width="1.3"/><line x1="584" x2="593.5" y1="165" y2="165" stroke="#a6cff6" stroke-width="1.3"/><rect x="574.5" y="154.3" width="11" height="4" rx="2" fill="#e0444a" stroke="#a82020" stroke-width=".8"/><path d="M574.5 160 L580 166.8 L585.5 160 Z" fill="#4a94dc" stroke="#2a5aa8" stroke-width=".8"/></svg>
<div id="inp" class="a"></div>
<div id="ed" class="a"></div>
<div id="g1" class="a"></div>
<div id="gl1" class="a"></div>
<div id="g2" class="a"></div>
<div id="gl2" class="a"></div>
<div id="g3" class="a"></div>
<div id="gl3" class="a"></div>
<div id="g4" class="a"></div>
<div class="nums"><div>807</div><div>808</div><div>809</div><div>810</div><div>811</div><div>812</div><div>813</div><div>814</div><div>815</div><div>816</div><div>817</div><div>818</div><div>819</div><div>820</div><div>821</div><div>822</div><div>823</div><div>824</div><div>825</div><div>826</div><div>827</div><div>828</div><div>829</div><div>830</div><div>831</div><div>832</div><div>833</div><div>834</div><div>835</div><div>836</div><div>837</div><div>838</div></div>
<div class="code"><div class="r g">  <b>SELF</b><i class="p">.</i><i class="m">AddHistoryField</i><i class="p">(</i>?IPPH:AddUsername<i class="p">,</i><i class="n">10</i><i class="p">)</i></div><div class="r g">  <b>SELF</b><i class="p">.</i><i class="m">AddHistoryField</i><i class="p">(</i>?IPPH:ChangeDate<i class="p">,</i><i class="n">11</i><i class="p">)</i></div><div class="r g">  <b>SELF</b><i class="p">.</i><i class="m">AddHistoryField</i><i class="p">(</i>?IPPH:ChangeTime<i class="p">,</i><i class="n">12</i><i class="p">)</i></div><div class="r g">  <b>SELF</b><i class="p">.</i><i class="m">AddHistoryField</i><i class="p">(</i>?IPPH:ChangeUsername<i class="p">,</i><i class="n">14</i><i class="p">)</i></div><div class="r g">  <b>SELF</b><i class="p">.</i><i class="m">AddUpdateFile</i><i class="p">(</i>Access:IncPersonPhotos<i class="p">)</i></div><div class="r g">  <b>SELF</b><i class="p">.</i><i class="m">AddItem</i><i class="p">(</i>?Cancel<i class="p">,</i>RequestCancelled<i class="p">)</i>                   <i class="c">! Add the cancel control to the window manager</i></div><div class="r g">  <i class="c">! [Priority 7300]</i></div><div class="r w"></div><div class="r g">  <i class="c">! Open Files</i></div><div class="r g">    <i class="c">!mbe=0</i></div><div class="r g">  Relate:ActLog<i class="p">.</i><i class="m">SetOpenRelated</i><i class="p">(</i><i class="p">)</i></div><div class="r g">  Relate:ActLog<i class="p">.</i><i class="m">Open</i><i class="p">(</i><i class="p">)</i>                                     <i class="c">! File ActLog used by this procedure</i></div><div class="r g">  Relate:IncPersonPhotos<i class="p">.</i><i class="m">Open</i><i class="p">(</i><i class="p">)</i>                            <i class="c">! File IncPersonPhotos used by this procedure</i></div><div class="r g">  <b>SELF</b><i class="p">.</i>FilesOpened <i class="p">=</i> <i class="t">True</i></div><div class="r g">  <b>SELF</b><i class="p">.</i>Primary <i class="p">&amp;=</i> Relate:IncPersonPhotos</div><div class="r g">  <b>IF</b> <b>SELF</b><i class="p">.</i>Request <i class="p">=</i> ViewRecord <b>AND</b> <b>NOT</b> <b>SELF</b><i class="p">.</i>BatchProcessing <i class="c">! Setup actions for ViewOnly Mode</i></div><div class="r g">    <b>SELF</b><i class="p">.</i>InsertAction <i class="p">=</i> Insert:None</div><div class="r g">    <b>SELF</b><i class="p">.</i>DeleteAction <i class="p">=</i> Delete:None</div><div class="r g">    <b>SELF</b><i class="p">.</i>ChangeAction <i class="p">=</i> Change:None</div><div class="r g">    <b>SELF</b><i class="p">.</i>CancelAction <i class="p">=</i> Cancel:Cancel</div><div class="r g">    <b>SELF</b><i class="p">.</i>OkControl <i class="p">=</i> <i class="n">0</i></div><div class="r g">  <b>ELSE</b></div><div class="r g">    <b>SELF</b><i class="p">.</i>ChangeAction <i class="p">=</i> Change:Caller                      <i class="c">! Changes allowed</i></div><div class="r g">    <b>SELF</b><i class="p">.</i>CancelAction <i class="p">=</i> Cancel:Cancel<i class="p">+</i>Cancel:Query         <i class="c">! Confirm cancel</i></div><div class="r g">    <b>SELF</b><i class="p">.</i>OkControl <i class="p">=</i> ?OK</div><div class="r g">    <b>IF</b> <b>SELF</b><i class="p">.</i><i class="m">PrimeUpdate</i><i class="p">(</i><i class="p">)</i> <b>THEN</b> <b>RETURN</b> Level:Notify<i class="p">.</i></div><div class="r g">  <b>END</b></div><div class="r g">  <i class="c">! [Priority 7800]</i></div><div class="r w"></div><div class="r g">  <i class="c">! Open the window</i></div><div class="r g">  <b>SELF</b><i class="p">.</i><i class="m">Open</i><i class="p">(</i>QuickWindow<i class="p">)</i>                                   <i class="c">! Open window</i></div><div class="r g">  <i class="c">! [Priority 8001]</i></div></div>
<div class="a" style="left:448px;top:688px;width:2px;height:16px;background:#000"></div>
<svg style="left:0;top:0" width="1053" height="749" viewBox="0 0 1053 749"><path d="M175.6 207.5 L203.8 189.4 L203.8 198.2 L231.8 198.2 L231.8 216.8 L203.8 216.8 L203.8 225.6 Z" fill="none" stroke="#ec1c24" stroke-width="4.3" stroke-linejoin="round"/></svg>
<svg style="left:0;top:0" width="1053" height="749" viewBox="0 0 1053 749"><path d="M722.8 425.5 L754.7 407.5 L754.7 416.3 L786.7 416.3 L786.7 434.7 L754.7 434.7 L754.7 443.5 Z" fill="none" stroke="#ec1c24" stroke-width="4.6" stroke-linejoin="round"/></svg>
</body></html>
